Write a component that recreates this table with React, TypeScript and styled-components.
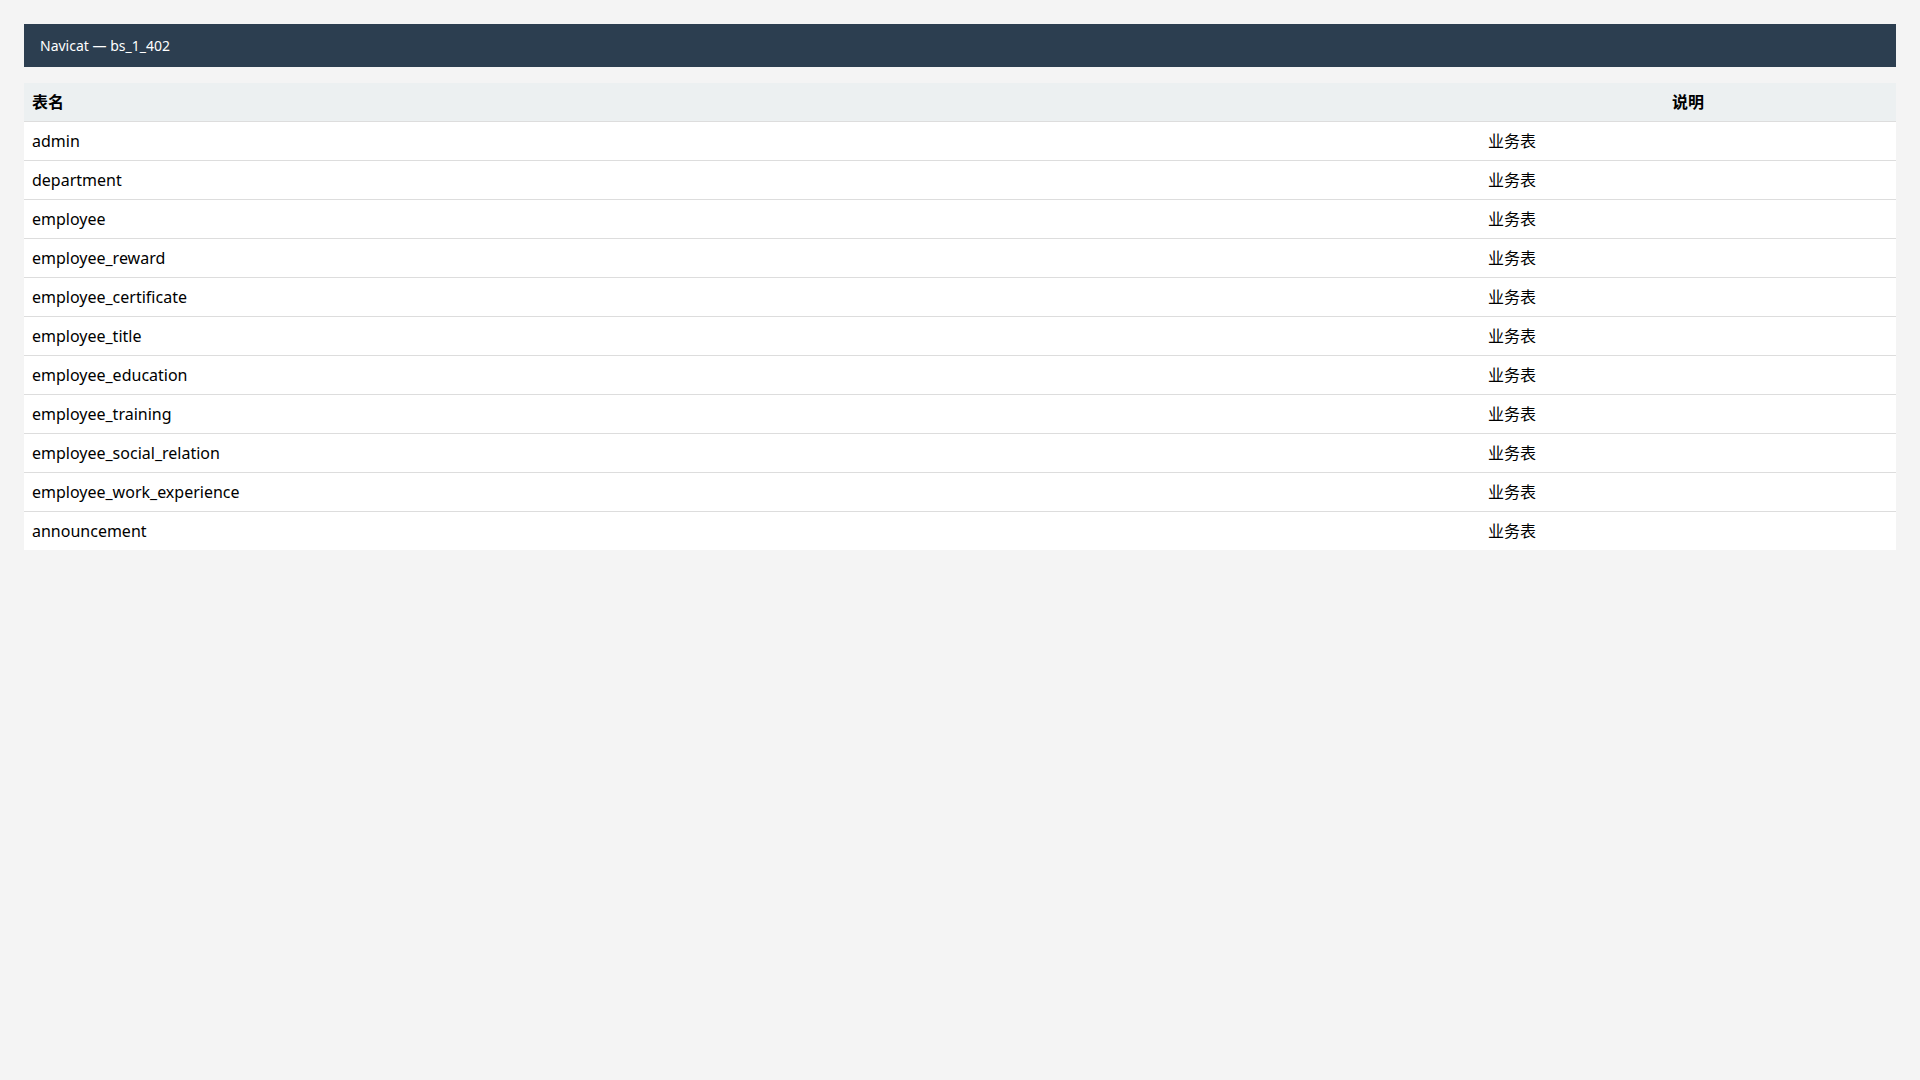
import React from 'react';
import styled, { createGlobalStyle } from 'styled-components';

const GlobalStyle = createGlobalStyle`
  body {
    margin: 0;
    background: #f4f4f4;
    font-family: "Noto Sans", "Noto Sans CJK SC", sans-serif;
    color: #000;
  }
`;

const Page = styled.div`
  padding: 24px;
  display: flex;
  flex-direction: column;
  gap: 16px;
`;

const TitleBar = styled.div`
  background: #2c3e50;
  color: #fff;
  font-size: 14px;
  line-height: 21px;
  padding: 11px 16px;
`;

const Table = styled.table`
  width: 100%;
  border-collapse: collapse;
  background: #fff;
  font-size: 16px;
`;

const HeadCell = styled.th<{ $align: 'left' | 'center'; $width?: string }>`
  background: #ecf0f1;
  font-weight: bold;
  text-align: ${({ $align }) => $align};
  width: ${({ $width }) => $width ?? 'auto'};
  padding: 8px;
  line-height: 22px;
  border-bottom: 1px solid #ddd;
`;

const Row = styled.tr`
  &:not(:last-child) td {
    border-bottom: 1px solid #ddd;
  }
`;

const Cell = styled.td`
  padding: 8px;
  line-height: 22px;
`;

const tables = [
  'admin',
  'department',
  'employee',
  'employee_reward',
  'employee_certificate',
  'employee_title',
  'employee_education',
  'employee_training',
  'employee_social_relation',
  'employee_work_experience',
  'announcement',
];

const App: React.FC = () => {
  return (
    <Page>
      <GlobalStyle />
      <TitleBar>Navicat — bs_1_402</TitleBar>
      <Table>
        <thead>
          <tr>
            <HeadCell $align="left">表名</HeadCell>
            <HeadCell $align="center" $width="400px">说明</HeadCell>
          </tr>
        </thead>
        <tbody>
          {tables.map((name) => (
            <Row key={name}>
              <Cell>{name}</Cell>
              <Cell>业务表</Cell>
            </Row>
          ))}
        </tbody>
      </Table>
    </Page>
  );
};

export default App;
